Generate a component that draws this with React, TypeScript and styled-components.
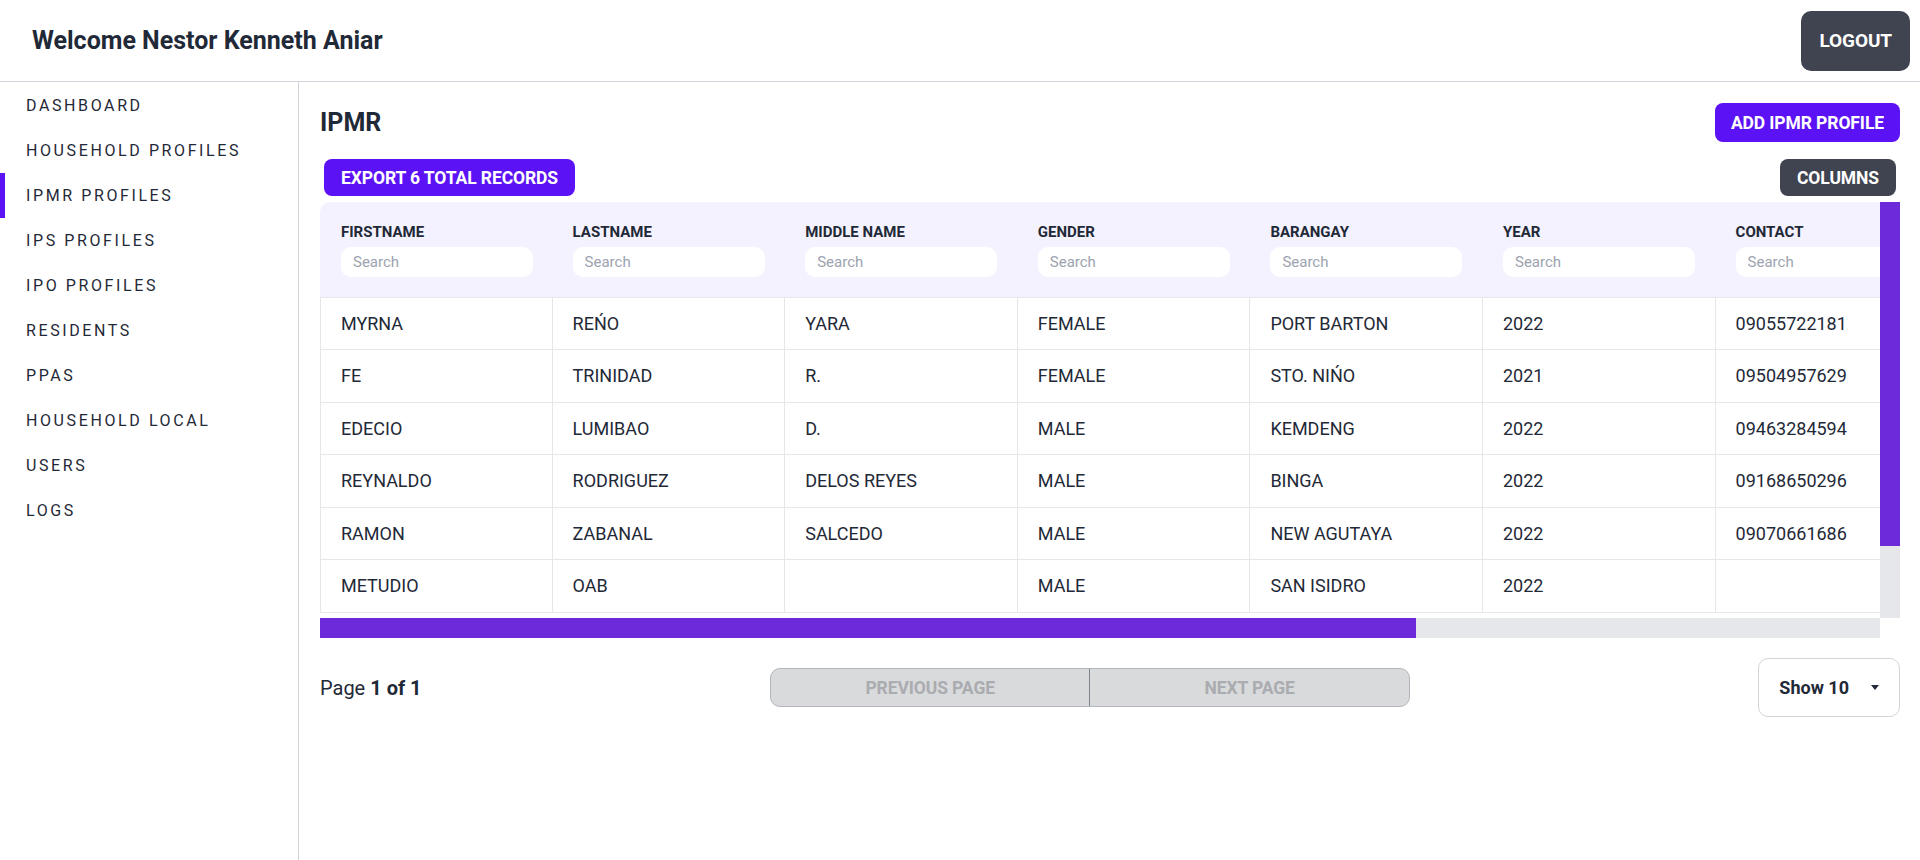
import React from 'react';
import styled, { createGlobalStyle } from 'styled-components';

const PURPLE = '#5b12f5';
const SCROLL = '#6d2ad8';
const TRACK = '#e5e7eb';
const DARK = '#3f4450';
const TEXT = '#1f2937';

const GlobalStyle = createGlobalStyle`
  *, *::before, *::after { box-sizing: border-box; }
  html, body { margin: 0; padding: 0; height: 100%; }
  body {
    font-family: Roboto, "Liberation Sans", Arial, sans-serif;
    color: ${TEXT};
    background: #ffffff;
  }
  #root { height: 100%; }
`;

const Page = styled.div`
  display: flex;
  flex-direction: column;
  height: 100vh;
`;

const TopBar = styled.header`
  flex: none;
  height: 82px;
  display: flex;
  align-items: center;
  justify-content: space-between;
  padding: 0 10px 0 32px;
  border-bottom: 1px solid #d1d5db;
`;

const Welcome = styled.h1`
  margin: 0;
  font-size: 25px;
  font-weight: 700;
  color: ${TEXT};
`;

const Button = styled.button<{ $variant: 'primary' | 'dark'; $size?: 'lg' | 'md'; $tall?: boolean; $m?: boolean }>`
  border: none;
  cursor: pointer;
  font-family: inherit;
  font-weight: 700;
  text-transform: uppercase;
  color: #ffffff;
  background: ${(p) => (p.$variant === 'primary' ? PURPLE : DARK)};
  border-radius: ${(p) => (p.$size === 'lg' ? '10px' : '8px')};
  font-size: ${(p) => (p.$size === 'lg' ? '19px' : '17.5px')};
  line-height: 22px;
  padding: ${(p) => (p.$size === 'lg' ? '19px 18px' : p.$tall ? '8.5px 16px' : '7.5px 17px')};
  margin: ${(p) => (p.$m ? '4px' : '0')};
  letter-spacing: -0.1px;
  white-space: nowrap;
`;

const Body = styled.div`
  flex: 1;
  display: flex;
  min-height: 0;
`;

const Sidebar = styled.nav`
  flex: none;
  width: 299px;
  padding-top: 1px;
  border-right: 1px solid #d1d5db;
`;

const NavList = styled.ul`
  list-style: none;
  margin: 0;
  padding: 0;
`;

const NavItem = styled.li<{ $active?: boolean }>`
  padding: 10px 0 10px 21px;
  border-left: 5px solid ${(p) => (p.$active ? PURPLE : 'transparent')};
  font-size: 16px;
  line-height: 25px;
  letter-spacing: 2.6px;
  text-transform: uppercase;
  color: ${TEXT};
  cursor: pointer;
`;

const Main = styled.main`
  flex: 1;
  min-width: 0;
  padding: 21px 20px 0 21px;
`;

const TitleRow = styled.div`
  display: flex;
  align-items: center;
  justify-content: space-between;
  margin-bottom: 13px;
`;

const Title = styled.h2`
  margin: 0;
  font-size: 25px;
  font-weight: 700;
  color: ${TEXT};
`;

const Toolbar = styled.div`
  display: flex;
  align-items: center;
  justify-content: space-between;
  margin-bottom: 2px;
`;

/* Table frame: viewport plus drawn scrollbars, laid out as a grid */
const TableFrame = styled.div`
  display: grid;
  grid-template-columns: minmax(0, 1fr) 20px;
  grid-template-rows: 416px 20px;
`;

const Viewport = styled.div`
  overflow: hidden;
  min-width: 0;
`;

const VTrack = styled.div`
  background: ${TRACK};
  display: flex;
  flex-direction: column;
`;

const HTrack = styled.div`
  background: ${TRACK};
  display: flex;
`;

const VThumb = styled.div<{ $ratio: number }>`
  background: ${SCROLL};
  height: ${(p) => p.$ratio * 100}%;
`;

const HThumb = styled.div<{ $ratio: number }>`
  background: ${SCROLL};
  width: ${(p) => p.$ratio * 100}%;
`;

const Corner = styled.div`
  background: #ffffff;
`;

const Table = styled.table<{ $width: number }>`
  width: ${(p) => p.$width}px;
  table-layout: fixed;
  border-collapse: separate;
  border-spacing: 0;
`;

const HeadCell = styled.th`
  background: #f4f2fe;
  text-align: left;
  vertical-align: top;
  padding: 20px 20px 19.5px 20px;
  border-bottom: 1px solid #e5e7eb;

  &:first-child {
    padding-left: 21px;
    border-top-left-radius: 10px;
  }
  &:last-child {
    border-top-right-radius: 10px;
  }
`;

const HeadLabel = styled.div`
  font-size: 15px;
  font-weight: 700;
  line-height: 20px;
  color: ${TEXT};
  margin-bottom: 5px;
  text-transform: uppercase;
  white-space: nowrap;
`;

const SearchInput = styled.input`
  display: block;
  width: 100%;
  max-width: 192px;
  height: 30px;
  border: none;
  outline: none;
  border-radius: 10px;
  background: #ffffff;
  padding: 0 12px;
  font-family: inherit;
  font-size: 15px;
  color: ${TEXT};

  &::placeholder {
    color: #9ca3af;
  }
`;

const Cell = styled.td`
  padding: 14px 20px;
  font-size: 18px;
  line-height: 23.5px;
  color: ${TEXT};
  border-right: 1px solid #e5e7eb;
  border-bottom: 1px solid #e5e7eb;
  white-space: nowrap;
  overflow: hidden;

  &:first-child {
    border-left: 1px solid #e5e7eb;
  }
`;

const Pagination = styled.div`
  display: flex;
  align-items: center;
  justify-content: space-between;
  margin-top: 20px;
`;

const PageInfo = styled.div`
  font-size: 20px;
  color: ${TEXT};

  strong {
    font-weight: 700;
  }
`;

const PagerGroup = styled.div`
  display: flex;
  width: 640px;
  height: 39px;
  border: 1px solid #b3b6bb;
  border-radius: 10px;
  overflow: hidden;
  background: #d9dadc;
`;

const PagerButton = styled.button`
  flex: 1;
  border: none;
  background: transparent;
  font-family: inherit;
  font-size: 17.5px;
  font-weight: 700;
  text-transform: uppercase;
  color: #aaacb0;
  letter-spacing: -0.1px;
  cursor: not-allowed;

  & + & {
    border-left: 1px solid #7d828a;
  }
`;

const ShowSelect = styled.button`
  display: flex;
  align-items: center;
  gap: 22px;
  height: 59px;
  padding: 0 20px;
  background: #ffffff;
  border: 1px solid #d4d4d8;
  border-radius: 10px;
  font-family: inherit;
  font-size: 18px;
  font-weight: 700;
  color: ${TEXT};
  cursor: pointer;
`;

const navItems = [
  'Dashboard',
  'Household Profiles',
  'IPMR Profiles',
  'IPS Profiles',
  'IPO Profiles',
  'Residents',
  'PPAs',
  'Household Local',
  'Users',
  'Logs',
];

const columns = ['Firstname', 'Lastname', 'Middle Name', 'Gender', 'Barangay', 'Year', 'Contact'];

const COL_W = 232.6;
const TABLE_W = 2221;
const colWidths = columns.map((_, i) => (i < columns.length - 1 ? COL_W : TABLE_W - COL_W * (columns.length - 1)));

const VIEW_W = 1560;
const VIEW_H = 416;
const CONTENT_H = 503;

const rows: string[][] = [
  ['MYRNA', 'REŃO', 'YARA', 'FEMALE', 'PORT BARTON', '2022', '09055722181'],
  ['FE', 'TRINIDAD', 'R.', 'FEMALE', 'STO. NIŃO', '2021', '09504957629'],
  ['EDECIO', 'LUMIBAO', 'D.', 'MALE', 'KEMDENG', '2022', '09463284594'],
  ['REYNALDO', 'RODRIGUEZ', 'DELOS REYES', 'MALE', 'BINGA', '2022', '09168650296'],
  ['RAMON', 'ZABANAL', 'SALCEDO', 'MALE', 'NEW AGUTAYA', '2022', '09070661686'],
  ['METUDIO', 'OAB', '', 'MALE', 'SAN ISIDRO', '2022', ''],
];

const Caret = () => (
  <svg width="8" height="5" viewBox="0 0 8 5" aria-hidden="true">
    <path d="M0 0 L8 0 L4 5 Z" fill={TEXT} />
  </svg>
);

export default function App() {
  return (
    <>
      <GlobalStyle />
      <Page>
        <TopBar>
          <Welcome>Welcome Nestor Kenneth Aniar</Welcome>
          <Button $variant="dark" $size="lg">Logout</Button>
        </TopBar>
        <Body>
          <Sidebar>
            <NavList>
              {navItems.map((item) => (
                <NavItem key={item} $active={item === 'IPMR Profiles'}>
                  {item}
                </NavItem>
              ))}
            </NavList>
          </Sidebar>
          <Main>
            <TitleRow>
              <Title>IPMR</Title>
              <Button $variant="primary" $tall>Add IPMR Profile</Button>
            </TitleRow>
            <Toolbar>
              <Button $variant="primary" $m>Export 6 total records</Button>
              <Button $variant="dark" $m>Columns</Button>
            </Toolbar>
            <TableFrame>
              <Viewport>
                <Table $width={TABLE_W}>
                  <colgroup>
                    {colWidths.map((w, i) => (
                      <col key={i} style={{ width: `${w}px` }} />
                    ))}
                  </colgroup>
                  <thead>
                    <tr>
                      {columns.map((c) => (
                        <HeadCell key={c}>
                          <HeadLabel>{c}</HeadLabel>
                          <SearchInput placeholder="Search" />
                        </HeadCell>
                      ))}
                    </tr>
                  </thead>
                  <tbody>
                    {rows.map((r, ri) => (
                      <tr key={ri}>
                        {r.map((v, ci) => (
                          <Cell key={ci}>{v}</Cell>
                        ))}
                      </tr>
                    ))}
                  </tbody>
                </Table>
              </Viewport>
              <VTrack>
                <VThumb $ratio={VIEW_H / CONTENT_H} />
              </VTrack>
              <HTrack>
                <HThumb $ratio={VIEW_W / TABLE_W} />
              </HTrack>
              <Corner />
            </TableFrame>
            <Pagination>
              <PageInfo>
                Page <strong>1 of 1</strong>
              </PageInfo>
              <PagerGroup>
                <PagerButton disabled>Previous Page</PagerButton>
                <PagerButton disabled>Next Page</PagerButton>
              </PagerGroup>
              <ShowSelect>
                Show 10
                <Caret />
              </ShowSelect>
            </Pagination>
          </Main>
        </Body>
      </Page>
    </>
  );
}
